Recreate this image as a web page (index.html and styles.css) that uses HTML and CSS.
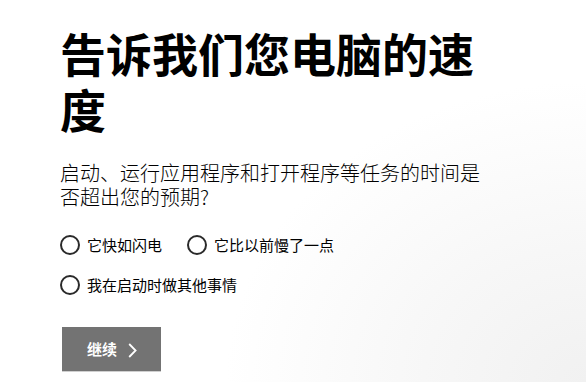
FILE: index.html
```html
<!DOCTYPE html>
<html lang="zh-CN">
<head>
<meta charset="utf-8">
<title>告诉我们您电脑的速度</title>
<link rel="stylesheet" href="styles.css">
</head>
<body>
<main class="page">
  <h1 class="title">告诉我们您电脑的速度</h1>
  <p class="subtitle">启动、运行应用程序和打开程序等任务的时间是否超出您的预期?</p>
  <div class="options">
    <div class="row">
      <label class="option"><span class="radio"></span><span class="label">它快如闪电</span></label>
      <label class="option"><span class="radio"></span><span class="label">它比以前慢了一点</span></label>
    </div>
    <div class="row">
      <label class="option"><span class="radio"></span><span class="label">我在启动时做其他事情</span></label>
    </div>
  </div>
  <button class="continue" type="button">
    <span class="btn-text">继续</span>
    <svg class="chevron" width="9" height="15" viewBox="0 0 9 15" aria-hidden="true">
      <path d="M1.2 1 L7.6 7.5 L1.2 14" fill="none" stroke="#fff" stroke-width="1.8"/>
    </svg>
  </button>
</main>
</body>
</html>
```

FILE: styles.css
```css
html, body {
  margin: 0;
  padding: 0;
  height: 100%;
}
body {
  font-family: "Noto Sans CJK SC", "Noto Sans", sans-serif;
  color: #000;
  background: radial-gradient(ellipse 360px 300px at 100% 100%, #f1f1f1 0%, #f7f7f7 45%, #ffffff 100%);
  background-color: #fff;
  overflow: hidden;
}
.page {
  padding: 24px 0 0 60px;
  max-width: 430px;
  display: flex;
  flex-direction: column;
  align-items: flex-start;
}
.title {
  margin: 0;
  font-size: 46px;
  line-height: 56px;
  font-weight: 700;
  color: #000;
}
.subtitle {
  margin: 25px 0 0;
  font-size: 20px;
  line-height: 24px;
  font-weight: 300;
  color: #000;
}
.options {
  margin-top: 26px;
  display: flex;
  flex-direction: column;
  gap: 20px;
}
.row {
  display: flex;
  gap: 25px;
}
.option {
  display: flex;
  align-items: center;
  gap: 7px;
  height: 20px;
}
.radio {
  box-sizing: border-box;
  width: 20px;
  height: 20px;
  border: 2px solid #2a2a2a;
  border-radius: 50%;
  background: #fff;
  flex: none;
}
.label {
  font-size: 15px;
  line-height: 20px;
  color: #000;
}
.continue {
  margin: 32px 0 0 2px;
  height: 44px;
  width: 99px;
  padding: 0 0 0 25px;
  border: 0;
  background: #737373;
  box-shadow: 0 1px 0 #cfcfcf;
  display: flex;
  align-items: center;
  gap: 11px;
  color: #fff;
  font-family: "Noto Sans CJK SC", "Noto Sans", sans-serif;
  cursor: pointer;
}
.btn-text {
  font-size: 15px;
  font-weight: 700;
  line-height: 20px;
}
.chevron {
  display: block;
  margin-top: 2px;
}
```
